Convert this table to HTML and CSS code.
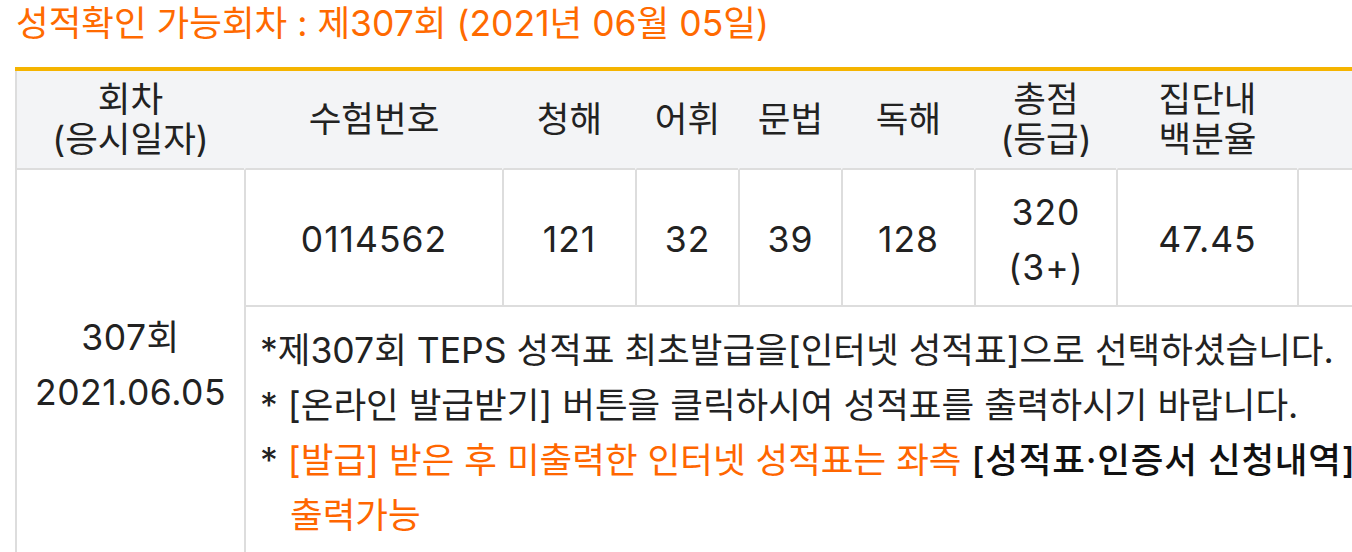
FILE: index.html
```html
<!DOCTYPE html>
<html lang="ko">
<head>
<meta charset="utf-8">
<title>성적확인</title>
<link rel="stylesheet" href="styles.css">
</head>
<body>
<div class="page">
  <h2 class="title">성적확인 가능회차 : 제307회 (2021년 06월 05일)</h2>
  <div class="board">
    <table class="score-table">
      <colgroup>
        <col class="c1"><col class="c2"><col class="c3"><col class="c4"><col class="c5"><col class="c6"><col class="c7"><col class="c8"><col class="c9">
      </colgroup>
      <thead>
        <tr>
          <th class="first">회차<br>(응시일자)</th>
          <th>수험번호</th>
          <th>청해</th>
          <th>어휘</th>
          <th>문법</th>
          <th>독해</th>
          <th>총점<br>(등급)</th>
          <th>집단내<br>백분율</th>
          <th></th>
        </tr>
      </thead>
      <tbody>
        <tr>
          <td class="round" rowspan="2">307회<br>2021.06.05</td>
          <td class="score">0114562</td>
          <td class="score">121</td>
          <td class="score">32</td>
          <td class="score">39</td>
          <td class="score">128</td>
          <td class="score">320<br>(3+)</td>
          <td class="score">47.45</td>
          <td class="score"></td>
        </tr>
        <tr>
          <td class="notice" colspan="8">
            <p class="note">*제307회 TEPS 성적표 최초발급을[인터넷 성적표]으로 선택하셨습니다.</p>
            <p class="note">* [온라인 발급받기] 버튼을 클릭하시여 성적표를 출력하시기 바랍니다.</p>
            <p class="note">* <span class="hl">[발급] 받은 후 미출력한 인터넷 성적표는 좌측</span> <span class="strong">[성적표·인증서 신청내역]</span><span class="hl">에서 출력가능</span></p>
          </td>
        </tr>
      </tbody>
    </table>
  </div>
</div>
</body>
</html>
```
FILE: styles.css
```css
html, body {
  margin: 0;
  padding: 0;
  background: #ffffff;
}
body {
  font-family: Inter, "Noto Sans CJK KR", sans-serif;
  color: #222222;
  overflow: hidden;
}
.page {
  padding-left: 15px;
}
.title {
  margin: 0 0 19px 0;
  padding-left: 1px;
  font-size: 35.5px;
  font-weight: 400;
  line-height: 48px;
  color: #ff6a00;
  white-space: nowrap;
}
.board {
  width: 1465px;
  border-top: 4px solid #f5b400;
}
.score-table {
  width: 1465px;
  table-layout: fixed;
  border-collapse: separate;
  border-spacing: 0;
  font-size: 35.5px;
}
.c1 { width: 229px; }
.c2 { width: 258px; }
.c3 { width: 133px; }
.c4 { width: 103px; }
.c5 { width: 103px; }
.c6 { width: 133px; }
.c7 { width: 142px; }
.c8 { width: 181px; }
.c9 { width: 183px; }
.score-table th {
  height: 97px;
  padding: 0;
  background: #f3f4f6;
  font-weight: 400;
  line-height: 40px;
  text-align: center;
  vertical-align: middle;
  border-left: 2px solid #f3f4f6;
  border-bottom: 2px solid #dddddd;
}
.score-table th.first {
  border-left-color: #dddddd;
}
.score-table td {
  padding: 0;
  border-left: 2px solid #dddddd;
  text-align: center;
  vertical-align: middle;
  line-height: 55px;
}
.score-table td.score {
  height: 137px;
  padding-top: 4px;
  box-sizing: border-box;
  border-bottom: 2px solid #dddddd;
  letter-spacing: 1px;
}
.score-table td.round {
  letter-spacing: 0.5px;
}
.score-table td.notice {
  text-align: left;
  padding: 16px 14px 16px 14px;
  word-break: keep-all;
}
.note {
  margin: 0;
  padding-left: 30px;
  text-indent: -30px;
}
.hl {
  color: #ff6600;
}
.strong {
  color: #111111;
  font-weight: 500;
  letter-spacing: 0.8px;
}
```
